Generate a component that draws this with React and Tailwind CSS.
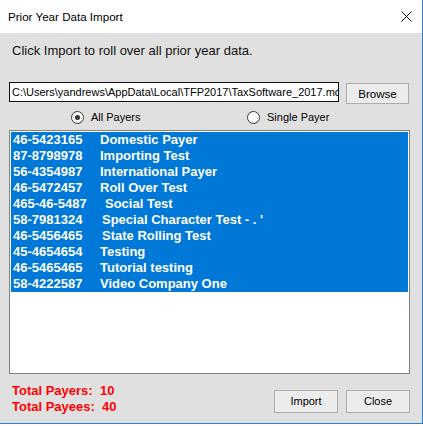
import React from "react";

const rows = [
  ["46-5423165", "Domestic Payer", ""],
  ["87-8798978", "Importing Test", ""],
  ["56-4354987", "International Payer", ""],
  ["46-5472457", "Roll Over Test", ""],
  ["465-46-5487", "Social Test", "pl-[5px]"],
  ["58-7981324", "Special Character Test - . '", "pl-[2px]"],
  ["46-5456465", "State Rolling Test", "pl-[2px]"],
  ["45-4654654", "Testing", ""],
  ["46-5465465", "Tutorial testing", ""],
  ["58-4222587", "Video Company One", ""],
];

function Radio({ checked }) {
  return (
    <span className="w-[13px] h-[13px] rounded-full border border-[#333333] bg-white flex items-center justify-center shrink-0">
      {checked && <span className="w-[5px] h-[5px] rounded-full bg-[#333333]" />}
    </span>
  );
}

export default function App() {
  return (
    <div
      className="w-[423px] h-[426px] bg-white"
      style={{ fontFamily: '"Liberation Sans", Arial, sans-serif' }}
    >
      <div className="w-[423px] h-[424px] border-r border-b border-[#2e7bcf] flex flex-col">
        {/* Title bar */}
        <div className="h-[33px] bg-white flex items-center justify-between pl-[8px] pr-[10px] shrink-0">
          <span className="text-[11.6px] text-black leading-none">Prior Year Data Import</span>
          <svg width="11" height="11" viewBox="0 0 11 11" className="block">
            <path d="M0.5 0.5 L10.5 10.5 M10.5 0.5 L0.5 10.5" stroke="#000" strokeWidth="1" fill="none" />
          </svg>
        </div>

        {/* Body */}
        <div className="flex-1 bg-[#e0e0e0] px-[9px] flex flex-col">
          <div className="mt-[10px] ml-[3px] text-[13px] leading-[16px] text-[#111]">
            Click Import to roll over all prior year data.
          </div>

          <div className="mt-[23px] flex items-start">
            <div className="w-[330px] h-[20px] border border-[#111] bg-white overflow-hidden whitespace-nowrap pl-[2px] text-[11px] leading-[18px] text-black">
              C:\Users\yandrews\AppData\Local\TFP2017\TaxSoftware_2017.mdb
            </div>
            <button className="ml-[7px] mt-[1px] w-[63px] h-[21px] border border-[#adadad] bg-[#ececec] text-[11.6px] leading-none text-black flex items-center justify-center">
              Browse
            </button>
          </div>

          <div className="mt-[6px] h-[14px] flex items-center text-[11px] text-black">
            <div className="ml-[62px] w-[176px] flex items-center">
              <Radio checked />
              <span className="ml-[7px] leading-none">All Payers</span>
            </div>
            <div className="flex items-center">
              <Radio />
              <span className="ml-[7px] leading-none">Single Payer</span>
            </div>
          </div>

          <div className="mt-[6px] w-[401px] h-[244px] border border-[#828282] bg-white p-[1px] shrink-0">
            {rows.map(([id, name, pad]) => (
              <div
                key={id}
                className="h-[16px] bg-[#0078d7] text-white font-bold text-[13px] leading-[16px] flex whitespace-nowrap"
              >
                <span className="w-[89px] pl-[2px] shrink-0">{id}</span>
                <span className={pad}>{name}</span>
              </div>
            ))}
          </div>

          <div className="w-[401px] flex justify-between">
            <div className="mt-[9px] ml-[3px] text-[13px] leading-[16px] font-bold text-[#ff0000] whitespace-pre">
              <div>Total Payers:  10</div>
              <div>Total Payees:  40</div>
            </div>
            <div className="mt-[16px] flex gap-[8px]">
              <button className="w-[64px] h-[23px] border border-[#adadad] bg-[#ececec] text-[11px] leading-none text-black flex items-center justify-center">
                Import
              </button>
              <button className="w-[64px] h-[23px] border border-[#adadad] bg-[#ececec] text-[11px] leading-none text-black flex items-center justify-center">
                Close
              </button>
            </div>
          </div>
        </div>
      </div>
    </div>
  );
}
